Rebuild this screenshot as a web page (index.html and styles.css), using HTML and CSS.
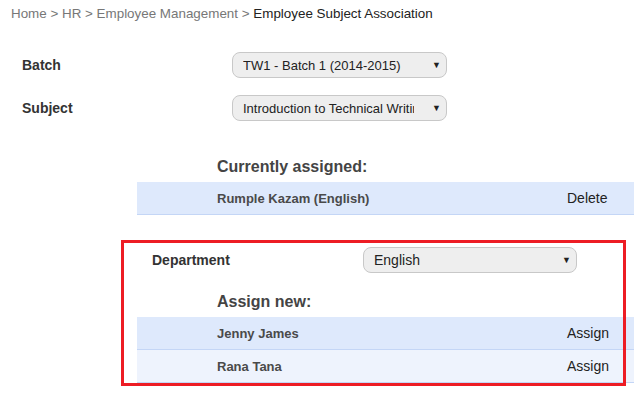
FILE: index.html
```html
<!DOCTYPE html>
<html lang="en">
<head>
    <meta charset="UTF-8">
    <title>Employee Subject Association</title>
<link rel="stylesheet" href="styles.css">
</head>
<body>
    <div class="breadcrumb">
        <a href="#">Home</a> &gt; <a href="#">HR</a> &gt; <a href="#">Employee Management</a> &gt; <span class="current">Employee Subject Association</span>
    </div>

    <div class="field first">
        <label>Batch</label>
        <div class="select"><span class="value">TW1 - Batch 1 (2014-2015)</span><span class="arrow">▼</span></div>
    </div>
    <div class="field">
        <label>Subject</label>
        <div class="select"><span class="value">Introduction to Technical Writing</span><span class="arrow">▼</span></div>
    </div>

    <div class="assoc">
        <h3>Currently assigned:</h3>
        <div class="row odd">
            <span class="name">Rumple Kazam (English)</span>
            <a class="action" href="#">Delete</a>
        </div>
    </div>

    <div class="assign-box">
        <div class="field dept">
            <label>Department</label>
            <div class="select wide"><span class="value">English</span><span class="arrow">▼</span></div>
        </div>
        <div class="assoc">
            <h3>Assign new:</h3>
            <div class="row odd">
                <span class="name">Jenny James</span>
                <a class="action" href="#">Assign</a>
            </div>
            <div class="row even">
                <span class="name">Rana Tana</span>
                <a class="action" href="#">Assign</a>
            </div>
        </div>
        <div class="highlight"></div>
    </div>
</body>
</html>
```

FILE: styles.css
```css
body {
  margin: 0;
  font-family: "Liberation Sans", Arial, sans-serif;
  font-size: 13px;
  color: #333;
  background: #fff;
}

.breadcrumb {
  padding: 6px 11px 5px;
  line-height: 16px;
  font-size: 13.4px;
  color: #777;
}

.breadcrumb a {
  color: #777;
  text-decoration: none;
}

.breadcrumb .current {
  color: #222;
}

/* label + fake select rows */
.field {
  display: flex;
  align-items: center;
  padding-left: 22px;
  margin-top: 17px;
}

.field.first {
  margin-top: 25px;
}

.field.label,
.field label {
  width: 210px;
  font-size: 14px;
  font-weight: bold;
  color: #333;
}

.select {
  box-sizing: border-box;
  width: 215px;
  height: 26px;
  display: flex;
  align-items: center;
  padding: 0 5px 0 10px;
  border: 1px solid #c8c8c8;
  border-radius: 8px;
  background: #eee;
  font-size: 13px;
  color: #222;
}

.select .value {
  flex: 1;
  white-space: nowrap;
  overflow: hidden;
  margin-right: 18px;
}

.select .arrow {
  font-size: 9px;
  color: #222;
}

.select.wide {
  width: 214px;
  font-size: 14px;
}

.field.dept {
  padding-left: 152px;
  margin-top: 0;
}

.field.dept label {
  width: 211px;
}

/* assigned lists */
.assoc {
  margin-left: 137px;
}

.assoc h3 {
  margin: 36px 0 5px 80px;
  font-size: 16px;
  line-height: 20px;
  color: #444;
}

.row {
  display: grid;
  grid-template-columns: 430px 1fr;
  align-items: center;
  height: 32px;
  border-bottom: 1px solid #c4d6f6;
}

.row.odd {
  background: #dee9fc;
}

.row.even {
  background: #eef3fd;
}

.row .name {
  padding-left: 80px;
  font-weight: bold;
  color: #4a4a4a;
}

.row .action {
  font-size: 14px;
  color: #222;
  text-decoration: none;
}

.assign-box {
  position: relative;
  margin-top: 32px;
  padding-bottom: 20px;
}

.assign-box .assoc h3 {
  margin-top: 19px;
}

/* red annotation frame drawn over the department section */
.highlight {
  position: absolute;
  left: 121px;
  top: -7px;
  width: 499px;
  height: 140px;
  border: 3px solid #ed1c24;
  pointer-events: none;
}
```
